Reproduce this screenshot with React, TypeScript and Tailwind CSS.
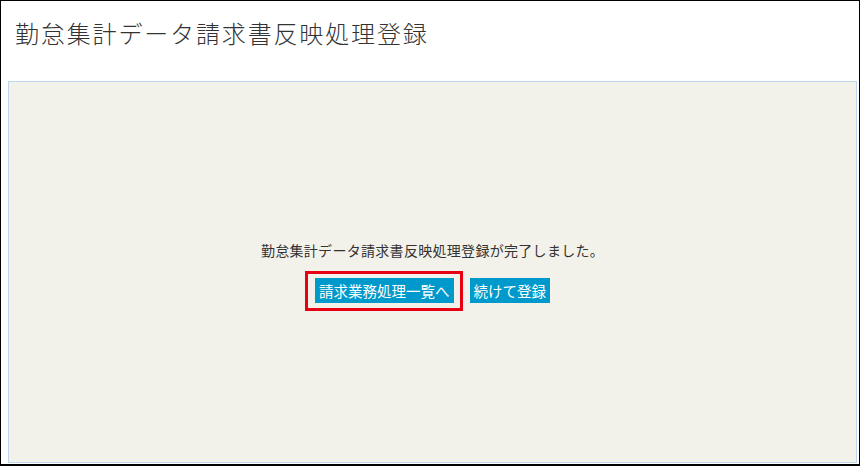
import React from 'react';

export default function App() {
  const font = { fontFamily: '"Noto Sans CJK JP", "Noto Sans", sans-serif' };

  return (
    <div
      className="w-[860px] h-[466px] bg-white border-t border-l border-r border-b-2 border-black flex flex-col text-[#333]"
      style={font}
    >
      {/* Header */}
      <div className="h-[80px] shrink-0 pl-[14px] pt-[15px]">
        <h1 className="text-[24px] leading-[34px] font-light tracking-[1.85px]">勤怠集計データ請求書反映処理登録</h1>
      </div>

      {/* Panel */}
      <div className="flex-1 ml-[7px] mr-[2px] mb-[1px] bg-[#f2f1ea] border border-[#bcd6f0] flex flex-col items-center pt-[158px]">
        <p className="text-[14px] leading-[20px] tracking-[0.3px] text-[#333]">
          勤怠集計データ請求書反映処理登録が完了しました。
        </p>
        <div className="flex gap-[16px] mt-[18px]">
          <div className="relative">
            <button className="h-[25px] px-[4px] bg-[#0099cc] text-white text-[14.5px] leading-[25px]">
              請求業務処理一覧へ
            </button>
            <div className="absolute -left-[10px] -top-[7px] w-[158px] h-[40px] border-[3px] border-[#e60012] pointer-events-none" />
          </div>
          <button className="h-[25px] px-[4px] bg-[#0099cc] text-white text-[14.5px] leading-[25px]">
            続けて登録
          </button>
        </div>
      </div>
    </div>
  );
}
